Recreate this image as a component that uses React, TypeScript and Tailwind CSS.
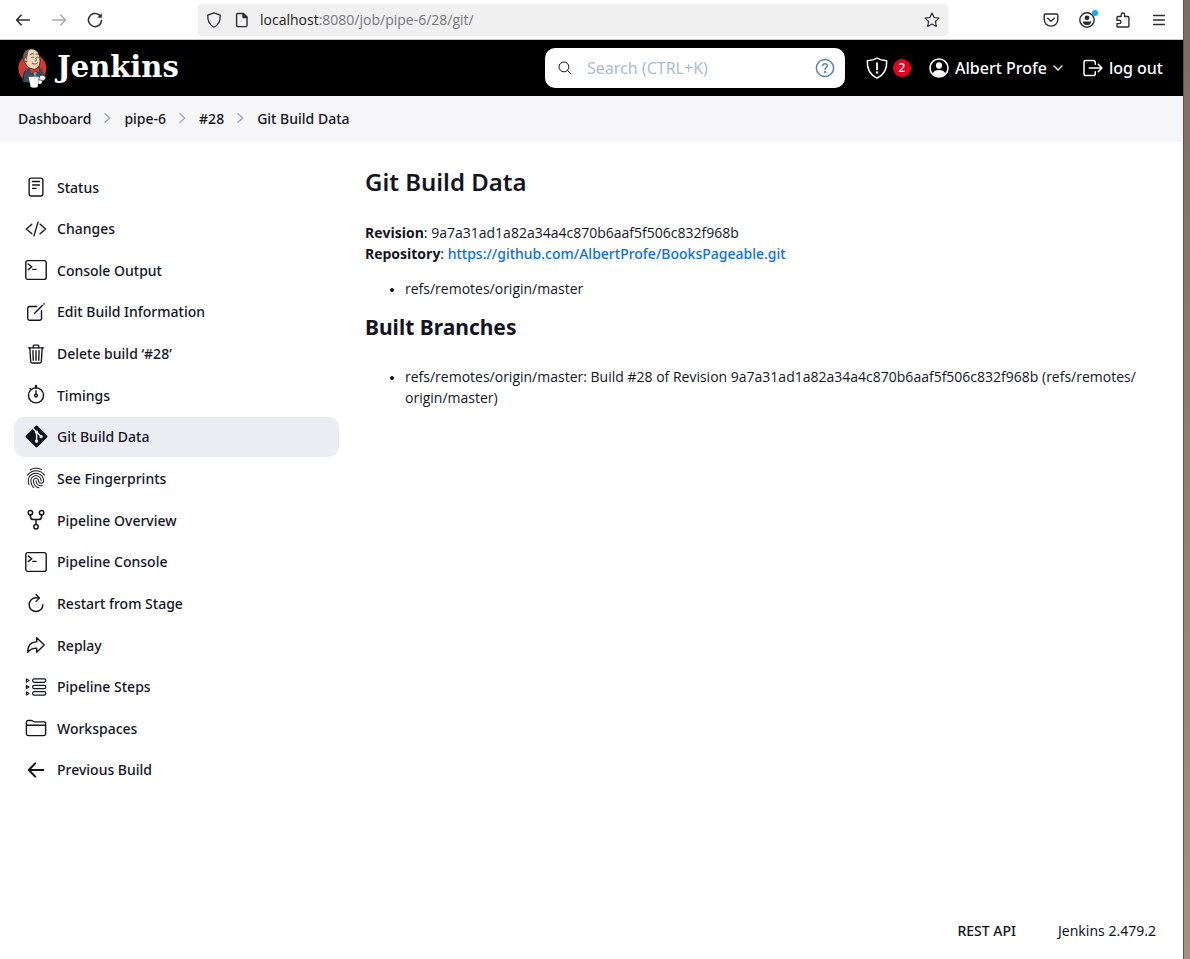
import type { ReactNode } from "react";
import {
  IoReaderOutline,
  IoCodeSlashOutline,
  IoCreateOutline,
  IoTrashOutline,
  IoFingerPrintOutline,
  IoRefreshOutline,
  IoArrowRedoOutline,
  IoFolderOutline,
  IoLogOutOutline,
  IoSearchOutline,
} from "react-icons/io5";
import { FaGitAlt } from "react-icons/fa";

type IconProps = { children: ReactNode; className?: string; box?: string; stroke?: number };

function Svg({ children, className = "size-[22px]", box = "0 0 22 22", stroke = 1.4 }: IconProps) {
  return (
    <svg
      viewBox={box}
      className={className}
      fill="none"
      stroke="currentColor"
      strokeWidth={stroke}
      strokeLinecap="round"
      strokeLinejoin="round"
      aria-hidden="true"
    >
      {children}
    </svg>
  );
}

const TerminalIcon = () => (
  <Svg>
    <rect x="0.8" y="1.6" width="20.4" height="18.8" rx="2" />
    <path d="M3.2 5l3.6 2.8-3.6 2.8M7.8 10.4h3.2" />
  </Svg>
);

const TimerIcon = () => (
  <Svg>
    <circle cx="11" cy="11.4" r="7.5" />
    <path d="M11 2v2M11 6.6v3.6M5 4.6l.4.4" />
    <path d="M11 1.8v1.6" strokeWidth="2.2" />
    <circle cx="11" cy="11.6" r="1.4" />
  </Svg>
);

const ForkIcon = () => (
  <Svg stroke={1.5}>
    <circle cx="5.4" cy="3.8" r="2.2" />
    <circle cx="16.6" cy="3.8" r="2.2" />
    <circle cx="11" cy="17.8" r="2.2" />
    <path d="M5.4 6v1.4a3.2 3.2 0 0 0 3.2 3.2h4.8a3.2 3.2 0 0 0 3.2-3.2V6M11 10.6v5" />
  </Svg>
);

const StepsIcon = () => (
  <Svg stroke={1.2}>
    {[4.6, 11, 17.4].map((y) => (
      <g key={y}>
        <rect x="7.6" y={y - 1.7} width="13.2" height="3.4" rx="1.7" />
        <path d={`M1.4 ${y - 1.5}l2.6 1.5-2.6 1.5z`} />
      </g>
    ))}
  </Svg>
);

const BackIcon = () => (
  <Svg stroke={2}>
    <path d="M10.2 4.4L3.8 11l6.4 6.6M4.2 11h14.2" />
  </Svg>
);

function JenkinsLogo() {
  return (
    <svg viewBox="0 0 90 120" className="h-10 w-[30px]" aria-hidden="true">
      <ellipse cx="46" cy="61" rx="42" ry="43" fill="#d33833" />
      <path d="M17 100C16 84 19 70 28 63l20-6 24 4c8 8 9 22 8 38l-20 4H20z" fill="#335061" />
      <path d="M20 99c-2-12 0-24 6-32" stroke="#1a2a35" strokeWidth="3" fill="none" />
      <path d="M42 59l12 26 12-24z" fill="#dfe7ee" />
      <path d="M49 68l6 22 6-22z" fill="#6d93ab" />
      <path
        d="M23 13C29 2 49-1 58 8c9 7 11 19 11 30 0 14-6 24-17 26-12 1-23-8-27-19C17 38 17 22 23 13z"
        fill="#f0d6b7"
        stroke="#2b1d18"
        strokeWidth="2.5"
      />
      <path d="M22 15c4-6 9-10 16-10-5 5-6 10-5 16-5 6-2 13-2 21-3 1-5 1-7-2-6-8-7-17-2-25z" fill="#6b5b54" />
      <path d="M27 30c-5-2-7 3-4 7 2 4 5 5 7 3" fill="#f0d6b7" stroke="#2b1d18" strokeWidth="2" />
      <path
        d="M40 20c3-3 7-4 10-2M57 19c3-2 6-1 8 1M43 29c2-2 5-2 7 0M59 28c2-1 4-1 5 0M55 30c4 4 6 8 0 9M46 46c6 4 12 3 16-2"
        stroke="#3b2a22"
        strokeWidth="2.4"
        fill="none"
        strokeLinecap="round"
      />
      <path d="M38 60l15 5 14-7 2 16-15-4-13 9z" fill="#d33833" stroke="#7a1613" strokeWidth="2" />
      <path d="M68 84c6-4 16-3 18 4 1 7-5 11-12 9l-9-2z" fill="#f4f4f4" stroke="#2b1d18" strokeWidth="2" />
      <path d="M35 87h30l-3 30c-6 3-14 3-21 0z" fill="#fff" />
      <path d="M35 87h30" stroke="#c6ccd2" strokeWidth="2" />
      <path d="M64 97l12 1-3 9-9 1z" fill="#fff" />
    </svg>
  );
}

const tasks: { label: string; icon: ReactNode; active?: boolean }[] = [
  { label: "Status", icon: <IoReaderOutline /> },
  { label: "Changes", icon: <IoCodeSlashOutline /> },
  { label: "Console Output", icon: <TerminalIcon /> },
  { label: "Edit Build Information", icon: <IoCreateOutline /> },
  { label: "Delete build ‘#28’", icon: <IoTrashOutline /> },
  { label: "Timings", icon: <TimerIcon /> },
  { label: "Git Build Data", icon: <FaGitAlt className="size-[25px] shrink-0" />, active: true },
  { label: "See Fingerprints", icon: <IoFingerPrintOutline /> },
  { label: "Pipeline Overview", icon: <ForkIcon /> },
  { label: "Pipeline Console", icon: <TerminalIcon /> },
  { label: "Restart from Stage", icon: <IoRefreshOutline /> },
  { label: "Replay", icon: <IoArrowRedoOutline /> },
  { label: "Pipeline Steps", icon: <StepsIcon /> },
  { label: "Workspaces", icon: <IoFolderOutline /> },
  { label: "Previous Build", icon: <BackIcon /> },
];

const crumbs = ["Dashboard", "pipe-6", "#28", "Git Build Data"];

function BrowserBar() {
  return (
    <div className="flex h-10 items-center border-b border-[#c9c9cb] bg-white pr-[15px] pl-[14px] text-[#2b2a33]">
      <div className="flex w-[184px] shrink-0 items-center gap-[18px]">
        <button aria-label="Back">
          <Svg className="size-[18px]" box="0 0 18 18" stroke={1.5}>
            <path d="M7.2 4L2.6 9l4.6 5M2.8 9h12.6" />
          </Svg>
        </button>
        <button aria-label="Forward" className="text-[#a9a9ad]">
          <Svg className="size-[18px]" box="0 0 18 18" stroke={1.5}>
            <path d="M10.8 4l4.6 5-4.6 5M15.2 9H2.6" />
          </Svg>
        </button>
        <button aria-label="Reload">
          <Svg className="size-[18px]" box="0 0 18 18" stroke={1.5}>
            <path d="M15.6 9.4a6.6 6.6 0 1 1-2.2-5.3" />
            <path d="M15.8 2.2v4.6h-4.6z" fill="currentColor" stroke="none" />
          </Svg>
        </button>
      </div>
      <div className="flex h-8 max-w-[750px] flex-1 items-center rounded bg-[#f0f0f1] px-2">
        <Svg className="size-4" box="0 0 16 16" stroke={1.3}>
          <path d="M8 .8l6.2 2.3c.4 5.4-1.4 9.5-6.2 12.1C3.2 12.6 1.4 8.5 1.8 3.1z" />
        </Svg>
        <Svg className="ml-3 size-4" box="0 0 16 16" stroke={1.4}>
          <path d="M3.6 1.5h5.8l3.6 3.6v8.5a1 1 0 0 1-1 1H3.6a1 1 0 0 1-1-1V2.5a1 1 0 0 1 1-1z" />
          <path d="M9 1.5v4h4z" fill="currentColor" />
        </Svg>
        <span className="ml-[10px] flex-1 font-['Open_Sans',sans-serif] text-[14px] text-[#77777c]">
          <span className="text-[#1c1b22]">localhost</span>:8080/job/pipe-6/28/git/
        </span>
        <button aria-label="Bookmark this page">
          <Svg className="size-4" box="0 0 16 16" stroke={1.2}>
            <path d="M8 1l2.1 4.5 4.9.6-3.6 3.4.9 4.9L8 12l-4.3 2.4.9-4.9L1 6.100l4.900-.6z" />
          </Svg>
        </button>
      </div>
      <div className="ml-auto flex items-center gap-[18px]">
        <button aria-label="Save to Pocket">
          <Svg className="size-[18px]" box="0 0 18 18" stroke={1.4}>
            <path d="M3.5 3h11c.8 0 1.3.5 1.3 1.3v4c0 4-3 6.8-6.8 6.8S2.2 12.3 2.2 8.3v-4C2.2 3.5 2.7 3 3.5 3z" />
            <path d="M5.7 7.2L9 10.2l3.3-3" />
          </Svg>
        </button>
        <button aria-label="Account" className="relative">
          <Svg className="size-[18px]" box="0 0 18 18" stroke={1.4}>
            <circle cx="9" cy="9" r="7.2" />
            <circle cx="9" cy="6.8" r="2.4" fill="currentColor" stroke="none" />
            <path d="M4.6 10.4h8.8c-.4 2.4-2 3.6-4.4 3.6s-4-1.2-4.4-3.6z" fill="currentColor" stroke="none" />
          </Svg>
          <span className="absolute -top-[1px] -right-[2px] size-[6px] rounded-full bg-[#00b3f4]" />
        </button>
        <button aria-label="Extensions">
          <Svg className="size-[18px]" box="0 0 18 18" stroke={1.4}>
            <path d="M3 9.2V6.4c0-.6.3-.9.9-.9h3.3V3.7a1.7 1.7 0 0 1 3.4 0v1.8H14c.6 0 .9.3.9.9v8.700c0 .6-.3.9-.9.9H3.900c-.6 0-.9-.3-.9-.9v-2.500h2.200a1.700 1.700 0 0 0 0-3.400z" />
          </Svg>
        </button>
        <button aria-label="Menu">
          <Svg className="size-[18px]" box="0 0 18 18" stroke={1.3}>
            <path d="M3.5 4.5h11M3.5 9h11M3.5 13.5h11" />
          </Svg>
        </button>
      </div>
    </div>
  );
}

function Header() {
  return (
    <header className="flex h-14 items-center bg-black pr-5 pl-[17px] text-[16px] font-medium text-white">
      <a href="#" className="flex items-center gap-[10px]">
        <JenkinsLogo />
        <span className="mb-[2px] font-['DejaVu_Serif',serif] text-[29px] leading-10 font-bold">Jenkins</span>
      </a>
      <div className="ml-auto flex h-10 w-[300px] items-center rounded-[10px] bg-white px-3">
        <IoSearchOutline className="size-4 text-[#14141f]" />
        <input
          type="text"
          aria-label="Search"
          placeholder="Search (CTRL+K)"
          className="ml-[14px] min-w-0 flex-1 font-normal text-black outline-none placeholder:text-[#a9bdd3]"
        />
        <a href="#" aria-label="Search help" className="mr-[-2px] text-[#5f83ad]">
          <Svg className="size-5" box="0 0 20 20" stroke={1.5}>
            <circle cx="10" cy="10" r="8.6" />
            <path d="M7.8 7.8c.1-1.4 1-2.1 2.3-2.1s2.2.8 2.2 1.9c0 1.7-2.2 1.8-2.2 3.6" />
            <circle cx="10.1" cy="13.9" r=".5" fill="currentColor" />
          </Svg>
        </a>
      </div>
      <button aria-label="Security warnings" className="ml-5 flex items-center gap-1">
        <Svg className="size-6" box="0 0 24 24" stroke={1.5}>
          <path d="M12 2.2c3 1.9 6.3 2.4 9.7 2.5.5 8.3-2.4 13.8-9.7 17.5-7.3-3.7-10.2-9.2-9.7-17.5 3.4-.1 6.7-.6 9.7-2.5z" />
          <path d="M12 7.2v6.2" strokeWidth="1.8" />
          <circle cx="12" cy="16.6" r=".5" fill="currentColor" />
        </Svg>
        <span className="flex size-[18px] items-center justify-center rounded-full bg-[#e6001f] text-[12px] leading-none">2</span>
      </button>
      <button className="ml-[18px] flex items-center gap-[6px]">
        <Svg className="size-5" box="0 0 20 20" stroke={1.6}>
          <circle cx="10" cy="10" r="9" />
          <ellipse cx="10" cy="7.6" rx="3" ry="3.3" fill="currentColor" stroke="none" />
          <path d="M3.6 15.4c1.4-2.4 3.6-3.3 6.4-3.3s5 .9 6.4 3.3C14.9 17.2 12.7 18.5 10 18.5s-4.9-1.3-6.4-3.1z" fill="currentColor" stroke="none" />
        </Svg>
        <span>Albert Profe</span>
        <Svg className="size-[10px]" box="0 0 10 10" stroke={1.3}>
          <path d="M1 3l4 4 4-4" />
        </Svg>
      </button>
      <a href="#" className="ml-[18px] flex items-center gap-1">
        <IoLogOutOutline className="size-6" />
        log out
      </a>
    </header>
  );
}

export default function App() {
  return (
    <div className="flex min-h-screen font-['Noto_Sans','Open_Sans',sans-serif] text-[14px] leading-[21px] text-[#14141f]">
      <div className="flex min-w-0 flex-1 flex-col bg-white">
        <BrowserBar />
        <Header />
        <nav aria-label="Breadcrumb" className="bg-[#f6f6f9] px-[18px] pt-[11px] pb-[13px]">
          <ol className="flex h-[22px] items-center gap-[13px] font-medium">
            {crumbs.map((c, i) => (
              <li key={c} className="flex items-center gap-[13px]">
                {i > 0 && (
                  <Svg className="h-[10px] w-[7px] text-[#98a9c0]" box="0 0 7 10" stroke={1.4}>
                    <path d="M1 .8L5.8 5 1 9.2" />
                  </Svg>
                )}
                <a href="#">{c}</a>
              </li>
            ))}
          </ol>
        </nav>
        <div className="flex flex-1 pt-[25px]">
          <aside className="w-[339px] shrink-0 pl-[14px]">
            <ul className="flex min-h-[623px] flex-col justify-between">
              {tasks.map((t) => (
                <li key={t.label}>
                  <a
                    href="#"
                    className={
                      t.active
                        ? "flex h-10 items-center gap-[10px] rounded-[10px] bg-[#ecedf3] px-[11px] font-medium"
                        : "flex h-10 items-center gap-[10px] rounded-[10px] px-[11px] font-medium"
                    }
                  >
                    <span className="flex size-[22px] items-center justify-center text-[22px]">{t.icon}</span>
                    {t.label}
                  </a>
                </li>
              ))}
            </ul>
          </aside>
          <main className="min-w-0 flex-1 pr-5 pl-[26px] font-['Open_Sans',sans-serif]">
            <h1 className="font-['Noto_Sans',sans-serif] text-[24px] leading-[30px] font-semibold">Git Build Data</h1>
            <p className="mt-[25px]">
              <b>Revision</b>: 9a7a31ad1a82a34a4c870b6aaf5f506c832f968b
              <br />
              <b>Repository</b>:{" "}
              <a href="#" className="font-['Noto_Sans',sans-serif] font-medium text-[#0b6fe4]">
                https://github.com/AlbertProfe/BooksPageable.git
              </a>
            </p>
            <ul className="mt-[14px] list-disc pl-10 marker:text-[11px]">
              <li>refs/remotes/origin/master</li>
            </ul>
            <h2 className="mt-[14px] font-['Noto_Sans',sans-serif] text-[21px] leading-[28px] font-bold">Built Branches</h2>
            <ul className="mt-[25px] list-disc pl-10 marker:text-[11px]">
              <li>
                refs/remotes/origin/master: Build #28 of Revision 9a7a31ad1a82a34a4c870b6aaf5f506c832f968b (refs/remotes/
                <wbr />
                origin/master)
              </li>
            </ul>
          </main>
        </div>
        <footer className="flex justify-end gap-[42px] px-[27px] pb-[18px]">
          <a href="#" className="font-medium">
            REST API
          </a>
          <a href="#">Jenkins 2.479.2</a>
        </footer>
      </div>
      <div className="w-[7px] shrink-0 border-l border-[#5d534d] bg-linear-to-b from-[#7b6d63] to-[#a5917f]" />
    </div>
  );
}
